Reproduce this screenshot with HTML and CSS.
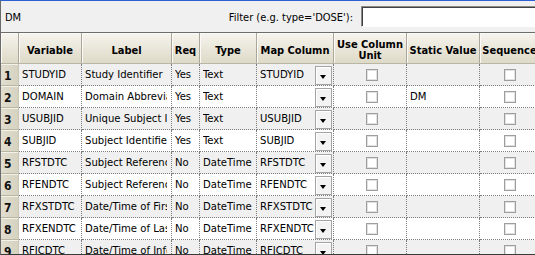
FILE: index.html
```html
<!DOCTYPE html>
<html>
<head>
<meta charset="utf-8">
<link rel="stylesheet" href="styles.css">
</head>
<body>
<div class="window">
  <div class="toolbar">
    <span class="title">DM</span>
    <div class="filter">
      <span class="filter-label">Filter (e.g. type='DOSE'):</span>
      <span class="filter-input"></span>
    </div>
  </div>
  <div class="grid-wrap">
    <table class="grid">
      <colgroup>
        <col class="c-num"><col class="c-var"><col class="c-label"><col class="c-req"><col class="c-type"><col class="c-map"><col class="c-unit"><col class="c-static"><col class="c-seq">
      </colgroup>
      <thead>
        <tr>
          <th class="corner"></th>
          <th><div class="h">Variable</div></th>
          <th><div class="h">Label</div></th>
          <th><div class="h">Req</div></th>
          <th><div class="h">Type</div></th>
          <th><div class="h">Map Column</div></th>
          <th><div class="h">Use Column<br>Unit</div></th>
          <th><div class="h">Static Value</div></th>
          <th><div class="h">Sequence</div></th>
        </tr>
      </thead>
      <tbody>
        <tr class="odd"><th class="num">1</th><td><div class="t">STUDYID</div></td><td><div class="t">Study Identifier</div></td><td><div class="t">Yes</div></td><td><div class="t">Text</div></td><td class="map"><div class="map-in"><span class="map-text">STUDYID</span><span class="drop"></span></div></td><td class="chk"><span class="box box-unit"></span></td><td><div class="t"></div></td><td class="chk"><span class="box"></span></td></tr>
        <tr><th class="num">2</th><td><div class="t">DOMAIN</div></td><td><div class="t">Domain Abbreviation</div></td><td><div class="t">Yes</div></td><td><div class="t">Text</div></td><td class="map"><div class="map-in"><span class="map-text"></span><span class="drop"></span></div></td><td class="chk"><span class="box box-unit"></span></td><td><div class="t">DM</div></td><td class="chk"><span class="box"></span></td></tr>
        <tr class="odd"><th class="num">3</th><td><div class="t">USUBJID</div></td><td><div class="t">Unique Subject Identifier</div></td><td><div class="t">Yes</div></td><td><div class="t">Text</div></td><td class="map"><div class="map-in"><span class="map-text">USUBJID</span><span class="drop"></span></div></td><td class="chk"><span class="box box-unit"></span></td><td><div class="t"></div></td><td class="chk"><span class="box"></span></td></tr>
        <tr><th class="num">4</th><td><div class="t">SUBJID</div></td><td><div class="t">Subject Identifier for the Study</div></td><td><div class="t">Yes</div></td><td><div class="t">Text</div></td><td class="map"><div class="map-in"><span class="map-text">SUBJID</span><span class="drop"></span></div></td><td class="chk"><span class="box box-unit"></span></td><td><div class="t"></div></td><td class="chk"><span class="box"></span></td></tr>
        <tr class="odd"><th class="num">5</th><td><div class="t">RFSTDTC</div></td><td><div class="t">Subject Reference Start Date/Time</div></td><td><div class="t">No</div></td><td><div class="t">DateTime</div></td><td class="map"><div class="map-in"><span class="map-text">RFSTDTC</span><span class="drop"></span></div></td><td class="chk"><span class="box box-unit"></span></td><td><div class="t"></div></td><td class="chk"><span class="box"></span></td></tr>
        <tr><th class="num">6</th><td><div class="t">RFENDTC</div></td><td><div class="t">Subject Reference End Date/Time</div></td><td><div class="t">No</div></td><td><div class="t">DateTime</div></td><td class="map"><div class="map-in"><span class="map-text">RFENDTC</span><span class="drop"></span></div></td><td class="chk"><span class="box box-unit"></span></td><td><div class="t"></div></td><td class="chk"><span class="box"></span></td></tr>
        <tr class="odd"><th class="num">7</th><td><div class="t">RFXSTDTC</div></td><td><div class="t">Date/Time of First Study Treatment</div></td><td><div class="t">No</div></td><td><div class="t">DateTime</div></td><td class="map"><div class="map-in"><span class="map-text">RFXSTDTC</span><span class="drop"></span></div></td><td class="chk"><span class="box box-unit"></span></td><td><div class="t"></div></td><td class="chk"><span class="box"></span></td></tr>
        <tr><th class="num">8</th><td><div class="t">RFXENDTC</div></td><td><div class="t">Date/Time of Last Study Treatment</div></td><td><div class="t">No</div></td><td><div class="t">DateTime</div></td><td class="map"><div class="map-in"><span class="map-text">RFXENDTC</span><span class="drop"></span></div></td><td class="chk"><span class="box box-unit"></span></td><td><div class="t"></div></td><td class="chk"><span class="box"></span></td></tr>
        <tr class="odd"><th class="num">9</th><td><div class="t">RFICDTC</div></td><td><div class="t">Date/Time of Informed Consent</div></td><td><div class="t">No</div></td><td><div class="t">DateTime</div></td><td class="map"><div class="map-in"><span class="map-text">RFICDTC</span><span class="drop"></span></div></td><td class="chk"><span class="box box-unit"></span></td><td><div class="t"></div></td><td class="chk"><span class="box"></span></td></tr>
      </tbody>
    </table>
  </div>
</div>
</body>
</html>
```
FILE: styles.css
```css
* { box-sizing: border-box; }
html, body { margin: 0; padding: 0; background: #ffffff; }
body {
  font-family: "DejaVu Sans Condensed", "DejaVu Sans", sans-serif;
  font-stretch: condensed;
  font-size: 11.2px;
  color: #000;
}
.window {
  width: 535px;
  height: 255px;
  overflow: hidden;
  border-top: 1px solid #2a62d6;
  border-left: 1px solid #6a6a6a;
  border-bottom: 1px solid #3a3a3a;
  background: #ffffff;
  display: flex;
  flex-direction: column;
}
.toolbar {
  flex: 0 0 auto;
  height: 32px;
  background: #f0f0f0;
  border-bottom: 1px solid #6d6d6d;
  display: flex;
  align-items: center;
  padding-left: 4px;
  overflow: hidden;
  font-size: 11px;
}
.title {
  flex: 1 1 auto;
  min-width: 0;
  padding-top: 1px;
}
.filter {
  flex: 0 0 auto;
  display: flex;
  align-items: center;
  gap: 8px;
  margin-right: -4px;
}
.filter-label { white-space: nowrap; padding-top: 1px; }
.filter-input {
  display: block;
  width: 178px;
  height: 21px;
  background: #ffffff;
  border: 1px solid;
  border-color: #8a8a8a #ffffff #ffffff #8a8a8a;
  box-shadow: inset 1px 1px 0 #404040;
}
.grid-wrap {
  flex: 1 1 auto;
  overflow: hidden;
}
.grid {
  table-layout: fixed;
  border-collapse: separate;
  border-spacing: 0;
  width: 539px;
}
.c-num { width: 18px; }
.c-var { width: 63px; }
.c-label { width: 90px; }
.c-req { width: 28px; }
.c-type { width: 57px; }
.c-map { width: 77px; }
.c-unit { width: 73px; }
.c-static { width: 73px; }
.c-seq { width: 60px; }

.grid thead th {
  height: 31px;
  padding: 4px 0 0 0;
  font-weight: bold;
  font-size: 11px;
  text-align: center;
  line-height: 11px;
  background: linear-gradient(#f6f4ee 0%, #ebe8dc 45%, #dedac8 100%);
  border-right: 1px solid #a9a79c;
  border-bottom: 1px solid #b9b6a6;
  box-shadow: inset 1px 1px 0 #fbfaf6;
}
.grid thead th.corner { padding: 0; }
.h {
  overflow: hidden;
  white-space: nowrap;
  padding: 0 1px;
}

.grid tbody td {
  height: 22px;
  padding: 0 4px 1px 3px;
  border-right: 1px dotted #7d7d7d;
  border-bottom: 1px dotted #7d7d7d;
  background: #ffffff;
}
.grid tbody tr.odd td { background: #f0f0f0; }
.t {
  overflow: hidden;
  white-space: nowrap;
}

.grid tbody th.num {
  height: 22px;
  padding: 2px 0 0 3px;
  text-align: left;
  font-weight: bold;
  font-size: 12px;
  color: #111;
  background: linear-gradient(to right, #e2ded0, #d6d2c0);
  border-right: 1px solid #c9c6b8;
  border-bottom: 1px solid #bab6a4;
  box-shadow: inset 0 1px 0 #f3f1e8;
}

.grid tbody td.map { padding: 0 1px 0 3px; }
.map-in {
  display: flex;
  align-items: center;
  height: 21px;
}
.map-text {
  flex: 1 1 auto;
  min-width: 0;
  overflow: hidden;
  white-space: nowrap;
  padding-bottom: 1px;
}
.drop {
  flex: 0 0 auto;
  position: relative;
  width: 17px;
  height: 19px;
  margin-top: 1px;
  background: #f3f3f3;
  border: 1px solid #a4a4a4;
  box-shadow: inset 1px 1px 0 #ffffff;
}
.drop::after {
  content: "";
  position: absolute;
  left: 4px;
  top: 8px;
  border-left: 3.5px solid transparent;
  border-right: 3.5px solid transparent;
  border-top: 4px solid #000;
}

.grid tbody td.chk { padding: 0; }
.box {
  display: block;
  width: 12px;
  height: 12px;
  margin: 1px auto 0;
  background: #ffffff;
  border: 1px solid #9e9e9e;
  box-shadow: inset 0 0 0 1px #e2e2e2;
}
.box-unit {
  position: relative;
  left: 2px;
}
```
